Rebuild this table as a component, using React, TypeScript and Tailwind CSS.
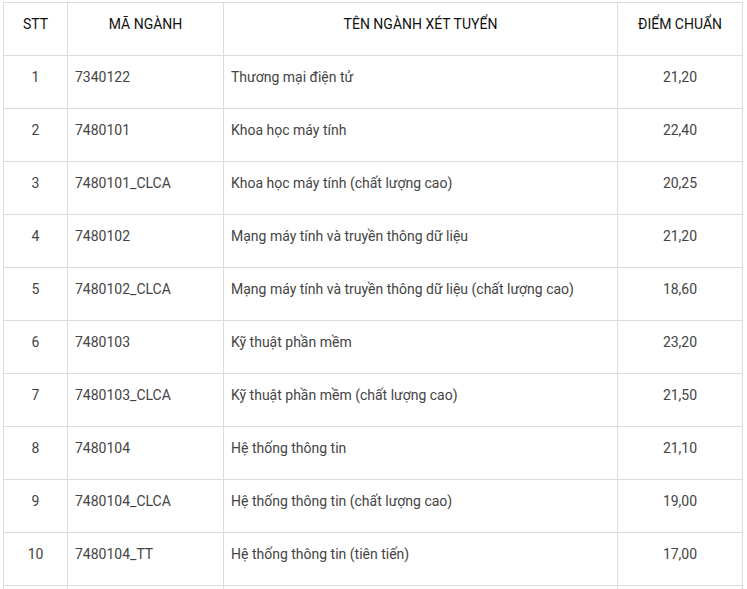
const ROWS = [
  { stt: "1", code: "7340122", name: "Thương mại điện tử", score: "21,20" },
  { stt: "2", code: "7480101", name: "Khoa học máy tính", score: "22,40" },
  { stt: "3", code: "7480101_CLCA", name: "Khoa học máy tính (chất lượng cao)", score: "20,25" },
  { stt: "4", code: "7480102", name: "Mạng máy tính và truyền thông dữ liệu", score: "21,20" },
  { stt: "5", code: "7480102_CLCA", name: "Mạng máy tính và truyền thông dữ liệu (chất lượng cao)", score: "18,60" },
  { stt: "6", code: "7480103", name: "Kỹ thuật phần mềm", score: "23,20" },
  { stt: "7", code: "7480103_CLCA", name: "Kỹ thuật phần mềm (chất lượng cao)", score: "21,50" },
  { stt: "8", code: "7480104", name: "Hệ thống thông tin", score: "21,10" },
  { stt: "9", code: "7480104_CLCA", name: "Hệ thống thông tin (chất lượng cao)", score: "19,00" },
  { stt: "10", code: "7480104_TT", name: "Hệ thống thông tin (tiên tiến)", score: "17,00" },
  // next row is cut off at the bottom edge
  { stt: "", code: "", name: "", score: "" },
];

const cell = "h-[53px] border-r border-b border-[#dcdcdc] pt-[11px] text-[14px] leading-5";

export default function App() {
  return (
    <div className="h-[589px] w-[747px] overflow-hidden bg-white pl-[3px] pt-[2px] font-['Roboto',sans-serif]">
      <div className="grid w-[740px] grid-cols-[64px_156px_394px_125px] border-l border-t border-[#dcdcdc]">
        <div className={`${cell} text-center text-[#111]`}>STT</div>
        <div className={`${cell} text-center text-[#111]`}>MÃ NGÀNH</div>
        <div className={`${cell} text-center text-[#111]`}>TÊN NGÀNH XÉT TUYỂN</div>
        <div className={`${cell} text-center text-[#111]`}>ĐIỂM CHUẨN</div>
        {ROWS.map((r, i) => (
          <div key={i} className="contents">
            <div className={`${cell} text-center text-[#444]`}>{r.stt}</div>
            <div className={`${cell} pl-[7px] text-[#444]`}>{r.code}</div>
            <div className={`${cell} pl-[7px] text-[#444]`}>{r.name}</div>
            <div className={`${cell} text-center text-[#444]`}>{r.score}</div>
          </div>
        ))}
      </div>
    </div>
  );
}
